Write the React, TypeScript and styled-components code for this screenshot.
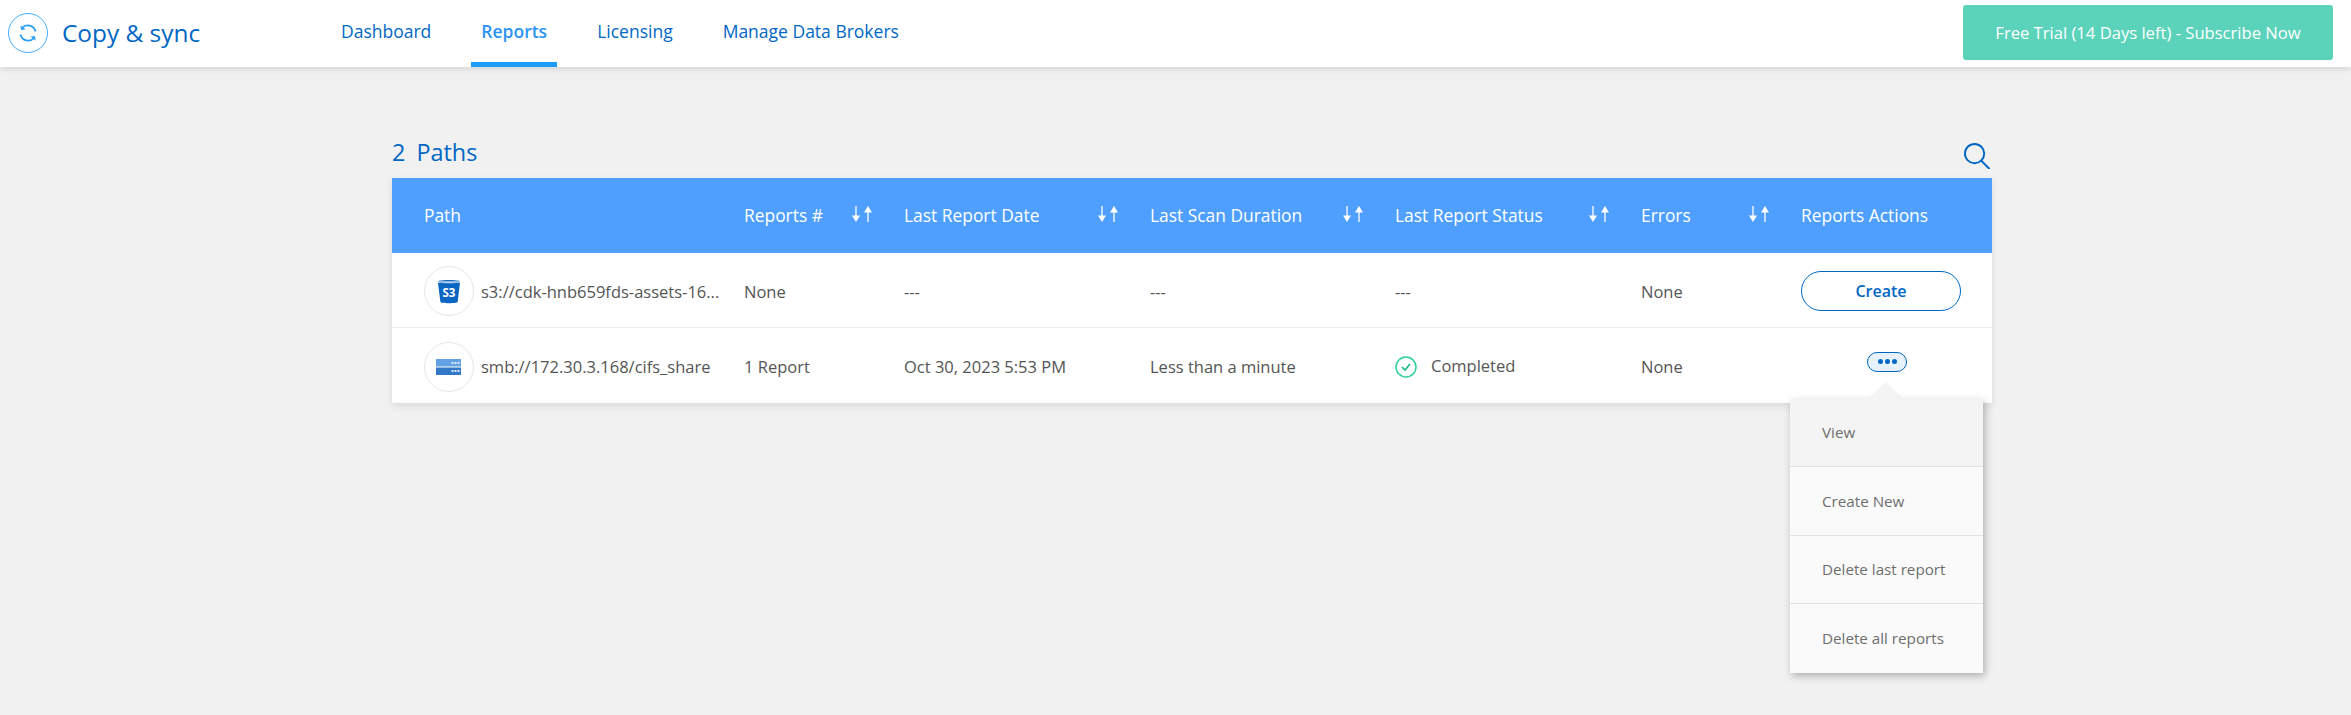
import React from "react";
import styled, { createGlobalStyle } from "styled-components";

const Global = createGlobalStyle`
  html, body { margin: 0; padding: 0; background: #f1f1f1; }
  body { font-family: "Open Sans", "Noto Sans", "Liberation Sans", sans-serif; }
  * { box-sizing: border-box; }
`;

const Page = styled.div`
  min-height: 715px;
  background: #f1f1f1;
`;

const TopBar = styled.header`
  height: 67px;
  background: #fff;
  box-shadow: 0 2px 6px rgba(0, 0, 0, 0.12);
  display: flex;
  align-items: stretch;
  padding: 0 18px 0 8px;
`;

const Brand = styled.div`
  width: 323px;
  display: flex;
  align-items: center;
  gap: 14px;
`;

const BrandMark = styled.div`
  width: 40px;
  height: 40px;
  border: 1px solid #45aeff;
  border-radius: 50%;
  display: flex;
  align-items: center;
  justify-content: center;
  margin-top: -2px;
`;

const BrandName = styled.div`
  font-size: 24.4px;
  color: #0067c5;
  margin-top: -2px;
`;

const Nav = styled.nav`
  display: flex;
  flex: 1;
  align-items: stretch;
  gap: 30px;
`;

const NavItem = styled.a<{ $active?: boolean }>`
  display: flex;
  align-items: center;
  padding: 0 10px 1px;
  font-size: 17.5px;
  font-weight: ${(p) => (p.$active ? 600 : 400)};
  color: ${(p) => (p.$active ? "#2b94f5" : "#0067c5")};
  border-bottom: 5px solid ${(p) => (p.$active ? "#1e9bff" : "transparent")};
  white-space: nowrap;
`;

const TrialButton = styled.button`
  margin: 5px 0 7px;
  width: 370px;
  border: 0;
  border-radius: 3px;
  background: #5bd3ba;
  color: #fff;
  font: inherit;
  font-size: 16.6px;
`;

const Main = styled.main`
  width: 1600px;
  margin-left: 392px;
`;

const TitleRow = styled.div`
  height: 111px;
  display: flex;
  align-items: flex-end;
  justify-content: space-between;
  padding-bottom: 9px;
`;

const Title = styled.h1`
  margin: 0 0 1px;
  font-size: 23.4px;
  font-weight: 400;
  line-height: 32px;
  color: #0067c5;
  word-spacing: 5px;
`;

const SearchBox = styled.div`
  display: flex;
  margin-right: 2px;
`;

const Table = styled.div`
  background: #fff;
  box-shadow: 0 3px 8px rgba(0, 0, 0, 0.1);
`;

const columns = "352px 160px 246px 245px 246px 160px 191px";

const HeadRow = styled.div`
  display: grid;
  grid-template-columns: ${columns};
  height: 75px;
  background: #4e9fff;
  align-items: center;
  color: #fff;
  font-size: 17.4px;
`;

const HeadCell = styled.div<{ $first?: boolean }>`
  display: flex;
  align-items: center;
  justify-content: space-between;
  padding-left: ${(p) => (p.$first ? 32 : 0)}px;
  padding-right: 32px;
  white-space: nowrap;
`;

const HeadLabel = styled.span`
  margin-top: -1px;
`;

const SortIcon = styled.svg`
  flex: none;
  margin-top: -4px;
`;

const Row = styled.div<{ $last?: boolean }>`
  display: grid;
  grid-template-columns: ${columns};
  height: 75px;
  padding-top: 2px;
  align-items: center;
  font-size: 16.5px;
  color: #555;
  border-bottom: ${(p) => (p.$last ? "none" : "1px solid #eeeeee")};
`;

const PathCell = styled.div`
  display: flex;
  align-items: center;
  gap: 7px;
  padding-left: 32px;
  min-width: 0;
`;

const IconCircle = styled.div`
  flex: none;
  width: 50px;
  height: 50px;
  border: 1px solid #e6e6e6;
  border-radius: 50%;
  display: flex;
  align-items: center;
  justify-content: center;
`;

const PathText = styled.span`
  white-space: nowrap;
`;

const StatusCell = styled.div`
  display: flex;
  align-items: center;
  gap: 14px;
`;

const StatusText = styled.span`
  margin-top: -2px;
`;

const ActionCell = styled.div`
  position: relative;
  display: flex;
  justify-content: center;
  width: 160px;
`;

const CreateButton = styled.button`
  width: 160px;
  height: 40px;
  border: 1px solid #0067c5;
  border-radius: 20px;
  background: #fff;
  color: #0067c5;
  font: inherit;
  font-size: 16px;
  font-weight: 600;
`;

const MoreButton = styled.button`
  width: 40px;
  height: 20px;
  margin: -10px 0 0 12px;
  padding: 0;
  border: 1.5px solid #0067c5;
  border-radius: 10px;
  background: #e7f1fc;
  display: flex;
  align-items: center;
  justify-content: center;
  gap: 2px;
`;

const Dot = styled.i`
  width: 5px;
  height: 5px;
  border-radius: 50%;
  background: #0067c5;
`;

const Menu = styled.div`
  position: absolute;
  top: 37px;
  left: -11px;
  width: 193px;
  background: #fafafa;
  box-shadow: 2px 3px 8px rgba(0, 0, 0, 0.28);
  z-index: 2;
`;

const MenuArrow = styled.div`
  position: absolute;
  top: -11px;
  left: 85px;
  width: 22px;
  height: 22px;
  background: #f4f4f4;
  transform: rotate(45deg);
  box-shadow: -1px -1px 2px rgba(0, 0, 0, 0.06);
`;

const MenuItem = styled.div<{ $active?: boolean; $h: number }>`
  position: relative;
  height: ${(p) => p.$h}px;
  padding-left: 32px;
  display: flex;
  align-items: center;
  font-size: 15.2px;
  color: #6e6e6e;
  background: ${(p) => (p.$active ? "#f4f4f4" : "transparent")};
  border-bottom: 1px solid #e2e2e2;
  &:last-child { border-bottom: 0; }
`;

const Sort = () => (
  <SortIcon width="20" height="20" viewBox="0 0 20 20" fill="none">
    <path d="M4 2v12" stroke="#fff" strokeWidth="1.3" />
    <path d="M0 11.500h8l-4 6.500z" fill="#fff" />
    <path d="M16 18V6" stroke="#fff" strokeWidth="1.3" />
    <path d="M12 8.500h8l-4-6.500z" fill="#fff" />
  </SortIcon>
);

const SyncMark = () => (
  <svg width="24" height="24" viewBox="0 0 24 24" fill="none" stroke="#2a9df4" strokeWidth="1.8">
    <path d="M19.500 10.500A8 8 0 0 0 5.800 7" />
    <path d="M4.500 13.500A8 8 0 0 0 18.200 17" />
    <path d="M4.200 4.500l1 4.500 4.500-.8z" fill="#2a9df4" stroke="none" />
    <path d="M19.800 19.500l-1-4.500-4.500.8z" fill="#2a9df4" stroke="none" />
  </svg>
);

const SearchMark = () => (
  <svg width="27" height="27" viewBox="0 0 28 28" fill="none" stroke="#0067c5" strokeWidth="2">
    <circle cx="12" cy="12" r="10" />
    <path d="M19 19.500l8 8" strokeLinecap="round" />
  </svg>
);

const S3Mark = () => (
  <svg width="24" height="26" viewBox="0 0 24 26">
    <path d="M1 3.500C1 1.500 23 1.500 23 3.500" fill="#1a6fc2" />
    <path d="M1 5h22l-2.400 19c-.1 1.600-17.100 1.600-17.200 0z" fill="#0a66c2" />
    <path d="M1 3.800c4 1.500 18 1.500 22 0" stroke="#7fb5e6" strokeWidth="1" fill="none" />
    <text x="12" y="18.500" fontSize="11.500" fontWeight="700" fill="#fff" textAnchor="middle" fontFamily="'Open Sans', sans-serif">S3</text>
  </svg>
);

const ServerMark = () => (
  <svg width="26" height="16" viewBox="0 0 26 16">
    <rect x="0" y="0" width="25" height="7.500" fill="#62a1e3" />
    <rect x="0" y="8.500" width="25" height="7.500" fill="#3378c6" />
    <path d="M15.500 3h2v2h-2zM18.500 3h2v2h-2zM21.500 3h2v2h-2zM15.500 11h2v2h-2zM18.500 11h2v2h-2zM21.500 11h2v2h-2z" fill="#d9e8f8" />
  </svg>
);

const CheckMark = () => (
  <svg width="22" height="22" viewBox="0 0 22 22" fill="none">
    <circle cx="11" cy="11" r="10" stroke="#2bcf9c" strokeWidth="1.500" />
    <path d="M7 11l3 3 5-6" stroke="#17b98a" strokeWidth="1.600" />
  </svg>
);

const headers = ["Path", "Reports #", "Last Report Date", "Last Scan Duration", "Last Report Status", "Errors", "Reports Actions"];
const sortable = [false, true, true, true, true, true, false];
const menu: [string, number][] = [["View", 68], ["Create New", 69], ["Delete last report", 68], ["Delete all reports", 69]];

export default function App() {
  return (
    <Page>
      <Global />
      <TopBar>
        <Brand>
          <BrandMark><SyncMark /></BrandMark>
          <BrandName>Copy &amp; sync</BrandName>
        </Brand>
        <Nav>
          <NavItem>Dashboard</NavItem>
          <NavItem $active>Reports</NavItem>
          <NavItem>Licensing</NavItem>
          <NavItem>Manage Data Brokers</NavItem>
        </Nav>
        <TrialButton>Free Trial (14 Days left) - Subscribe Now</TrialButton>
      </TopBar>
      <Main>
        <TitleRow>
          <Title>2 Paths</Title>
          <SearchBox><SearchMark /></SearchBox>
        </TitleRow>
        <Table>
          <HeadRow>
            {headers.map((h, i) => (
              <HeadCell key={h} $first={i === 0}>
                <HeadLabel>{h}</HeadLabel>
                {sortable[i] && <Sort />}
              </HeadCell>
            ))}
          </HeadRow>
          <Row>
            <PathCell>
              <IconCircle><S3Mark /></IconCircle>
              <PathText>s3://cdk-hnb659fds-assets-16...</PathText>
            </PathCell>
            <div>None</div>
            <div>---</div>
            <div>---</div>
            <div>---</div>
            <div>None</div>
            <ActionCell><CreateButton>Create</CreateButton></ActionCell>
          </Row>
          <Row $last>
            <PathCell>
              <IconCircle><ServerMark /></IconCircle>
              <PathText>smb://172.30.3.168/cifs_share</PathText>
            </PathCell>
            <div>1 Report</div>
            <div>Oct 30, 2023 5:53 PM</div>
            <div>Less than a minute</div>
            <StatusCell><CheckMark /><StatusText>Completed</StatusText></StatusCell>
            <div>None</div>
            <ActionCell>
              <MoreButton><Dot /><Dot /><Dot /></MoreButton>
              <Menu>
                <MenuArrow />
                {menu.map(([label, h], i) => (
                  <MenuItem key={label} $h={h} $active={i === 0}>{label}</MenuItem>
                ))}
              </Menu>
            </ActionCell>
          </Row>
        </Table>
      </Main>
    </Page>
  );
}
